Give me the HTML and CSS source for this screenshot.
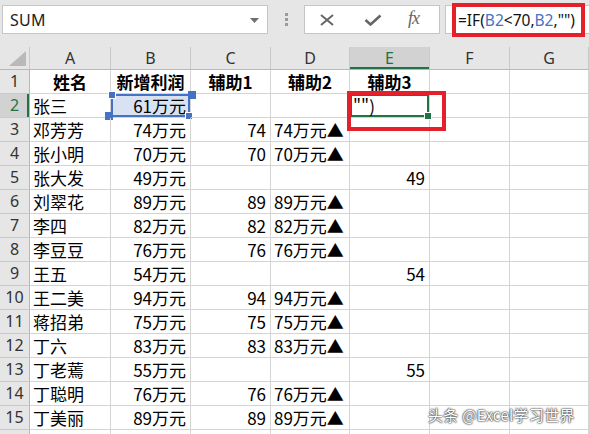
FILE: index.html
```html
<!DOCTYPE html>
<html lang="zh">
<head>
<meta charset="utf-8">
<link rel="stylesheet" href="styles.css">
</head>
<body>
<div class="toolbar">
  <div class="namebox">
    <span class="name">SUM</span>
    <svg class="dd" width="9" height="5" viewBox="0 0 9 5"><polygon points="0,0 9,0 4.5,5" fill="#707070"/></svg>
  </div>
  <div class="dots"><i></i><i></i><i></i></div>
  <div class="fxbox">
    <svg class="ic-x" width="16" height="12" viewBox="0 0 16 12"><path d="M2 1 L14 11 M14 1 L2 11" stroke="#666" stroke-width="2" fill="none"/></svg>
    <svg class="ic-ok" width="18" height="12" viewBox="0 0 18 12"><path d="M1.5 6 L6.5 10.5 L16.5 1.5" stroke="#666" stroke-width="2.6" fill="none"/></svg>
    <span class="fx">fx</span>
  </div>
  <div class="formula"><span class="ftext">=IF(<span class="ref">B2</span>&lt;70,<span class="ref">B2</span>,"")</span></div>
  <div class="fmark"></div>
</div>
<div class="sheet">
  <div class="ch corner"><svg width="17" height="15" viewBox="0 0 17 15"><polygon points="17,0 17,15 0,15" fill="#b9b9b9"/></svg></div>
  <div class="ch">A</div><div class="ch">B</div><div class="ch">C</div><div class="ch">D</div><div class="ch sel">E</div><div class="ch">F</div><div class="ch">G</div>

  <div class="rh">1</div><div class="c b">姓名</div><div class="c b">新增利润</div><div class="c b">辅助1</div><div class="c b">辅助2</div><div class="c b">辅助3</div><div class="c"></div><div class="c"></div>
  <div class="rh rsel">2</div><div class="c l">张三</div><div class="c r bsel">61万元</div><div class="c"></div><div class="c"></div><div class="c l active">"")</div><div class="c"></div><div class="c"></div>
  <div class="rh">3</div><div class="c l">邓芳芳</div><div class="c r">74万元</div><div class="c r">74</div><div class="c l">74万元▲</div><div class="c"></div><div class="c"></div><div class="c"></div>
  <div class="rh">4</div><div class="c l">张小明</div><div class="c r">70万元</div><div class="c r">70</div><div class="c l">70万元▲</div><div class="c"></div><div class="c"></div><div class="c"></div>
  <div class="rh">5</div><div class="c l">张大发</div><div class="c r">49万元</div><div class="c"></div><div class="c"></div><div class="c r">49</div><div class="c"></div><div class="c"></div>
  <div class="rh">6</div><div class="c l">刘翠花</div><div class="c r">89万元</div><div class="c r">89</div><div class="c l">89万元▲</div><div class="c"></div><div class="c"></div><div class="c"></div>
  <div class="rh">7</div><div class="c l">李四</div><div class="c r">82万元</div><div class="c r">82</div><div class="c l">82万元▲</div><div class="c"></div><div class="c"></div><div class="c"></div>
  <div class="rh">8</div><div class="c l">李豆豆</div><div class="c r">76万元</div><div class="c r">76</div><div class="c l">76万元▲</div><div class="c"></div><div class="c"></div><div class="c"></div>
  <div class="rh">9</div><div class="c l">王五</div><div class="c r">54万元</div><div class="c"></div><div class="c"></div><div class="c r">54</div><div class="c"></div><div class="c"></div>
  <div class="rh">10</div><div class="c l">王二美</div><div class="c r">94万元</div><div class="c r">94</div><div class="c l">94万元▲</div><div class="c"></div><div class="c"></div><div class="c"></div>
  <div class="rh">11</div><div class="c l">蒋招弟</div><div class="c r">75万元</div><div class="c r">75</div><div class="c l">75万元▲</div><div class="c"></div><div class="c"></div><div class="c"></div>
  <div class="rh">12</div><div class="c l">丁六</div><div class="c r">83万元</div><div class="c r">83</div><div class="c l">83万元▲</div><div class="c"></div><div class="c"></div><div class="c"></div>
  <div class="rh">13</div><div class="c l">丁老蔫</div><div class="c r">55万元</div><div class="c"></div><div class="c"></div><div class="c r">55</div><div class="c"></div><div class="c"></div>
  <div class="rh">14</div><div class="c l">丁聪明</div><div class="c r">76万元</div><div class="c r">76</div><div class="c l">76万元▲</div><div class="c"></div><div class="c"></div><div class="c"></div>
  <div class="rh">15</div><div class="c l">丁美丽</div><div class="c r">89万元</div><div class="c r">89</div><div class="c l">89万元▲</div><div class="c"></div><div class="c"></div><div class="c"></div>
  <div class="rh"></div><div class="c"></div><div class="c"></div><div class="c"></div><div class="c"></div><div class="c"></div><div class="c"></div><div class="c"></div>
</div>
<div class="watermark">头条 @Excel学习世界</div>
</body>
</html>
```
FILE: styles.css
```css
* { box-sizing: border-box; }
html, body { margin: 0; padding: 0; }
body {
  width: 589px;
  height: 434px;
  overflow: hidden;
  background: #ffffff;
  font-family: "Noto Sans CJK SC", "Noto Sans", sans-serif;
  position: relative;
}

.toolbar {
  height: 47px;
  background: #e6e6e6;
  display: flex;
  align-items: flex-start;
  padding-top: 5px;
  position: relative;
}
.namebox {
  margin-left: 2px;
  width: 266px;
  height: 29px;
  background: #fff;
  border: 1px solid #c6c6c6;
  display: flex;
  align-items: center;
  justify-content: space-between;
  padding: 0 8px 0 7px;
}
.name {
  font-family: "Noto Sans", sans-serif;
  font-size: 16px;
  color: #222;
  letter-spacing: 0.2px;
}
.dd { margin-top: 1px; }
.dots {
  margin-left: 17px;
  margin-top: 8px;
  display: flex;
  flex-direction: column;
  gap: 2px;
}
.dots i {
  display: block;
  width: 3px;
  height: 3px;
  background: #9a9a9a;
}
.fxbox {
  margin-left: 16px;
  width: 136px;
  height: 29px;
  background: #fff;
  border: 1px solid #c6c6c6;
  display: flex;
  align-items: center;
  padding-left: 14px;
}
.ic-x { margin-top: 1px; }
.ic-ok { margin-left: 29px; margin-top: 1px; }
.fx {
  margin-left: 26px;
  font-family: "Liberation Serif", serif;
  font-style: italic;
  font-size: 18px;
  color: #666;
  letter-spacing: -1px;
  margin-top: -2px;
}
.formula {
  margin-left: 5px;
  flex: 1;
  height: 29px;
  background: #fff;
  border: 1px solid #c6c6c6;
  border-right: none;
  display: flex;
  align-items: center;
  padding-left: 12px;
}
.ftext {
  font-family: "Noto Sans", sans-serif;
  font-size: 15.5px;
  color: #111;
  white-space: nowrap;
}
.ref { color: #4472c4; }
.fmark {
  position: absolute;
  left: 452px;
  top: 3px;
  width: 133px;
  height: 34px;
  border: 4px solid #e4202a;
}

.sheet {
  display: grid;
  grid-template-columns: 30px 81px 80px 80px 79px 80px 80px 79px;
  grid-template-rows: 23px;
  grid-auto-rows: 24px;
}
.ch {
  background: #e6e6e6;
  border-right: 1px solid #c9c9c9;
  border-bottom: 1px solid #b8b8b8;
  font-family: "Noto Sans", sans-serif;
  font-size: 16px;
  color: #333;
  text-align: center;
  line-height: 22px;
}
.ch.corner {
  display: flex;
  align-items: flex-end;
  justify-content: flex-end;
  padding: 0 3px 3px 0;
}
.ch.sel {
  background: #d2d2d2;
  color: #217346;
  box-shadow: inset 0 -2px 0 #217346;
}
.rh {
  background: #e6e6e6;
  border-right: 1px solid #b8b8b8;
  border-bottom: 1px solid #c9c9c9;
  font-family: "Noto Sans", sans-serif;
  font-size: 16px;
  color: #333;
  text-align: center;
  line-height: 23px;
}
.rh.rsel {
  background: #d2d2d2;
  color: #217346;
  box-shadow: inset -2px 0 0 #217346;
}
.c {
  border-right: 1px solid #d4d4d4;
  border-bottom: 1px solid #d4d4d4;
  font-size: 17px;
  color: #000;
  line-height: 23px;
  white-space: nowrap;
  overflow: visible;
  position: relative;
}
.c.b { font-weight: bold; text-align: center; }
.c.l { text-align: left; padding-left: 3px; }
.c.r { text-align: right; padding-right: 4px; }

.bsel {
  background: #d9e2f3;
  box-shadow: inset 0 0 0 2px #4472c4;
}
.bsel::before, .bsel::after {
  content: "";
  position: absolute;
  width: 6px;
  height: 6px;
  background: #4472c4;
  border: 1px solid #fff;
}
.bsel::before { left: -3px; top: -3px; box-shadow: 80px 0 0 -0px #4472c4; }
.bsel::after { right: -3px; bottom: -3px; box-shadow: -80px 0 0 0 #4472c4; }

.active {
  box-shadow: inset 0 0 0 2px #217346;
  padding-left: 4px;
}
.active::before {
  content: "";
  position: absolute;
  right: -3px;
  bottom: -3px;
  width: 6px;
  height: 6px;
  background: #217346;
  border: 1px solid #fff;
  z-index: 1;
}
.active::after {
  content: "";
  position: absolute;
  left: -3px;
  top: -3px;
  width: 91px;
  height: 32px;
  border: 4px solid #e4202a;
  z-index: 2;
}

.watermark {
  position: absolute;
  left: 428px;
  top: 404px;
  font-size: 15px;
  color: #ffffff;
  text-shadow: 0 0 1px #333, 0 0 2px #555, 0 0 2px #555;
  white-space: nowrap;
  letter-spacing: 0.3px;
}
```
